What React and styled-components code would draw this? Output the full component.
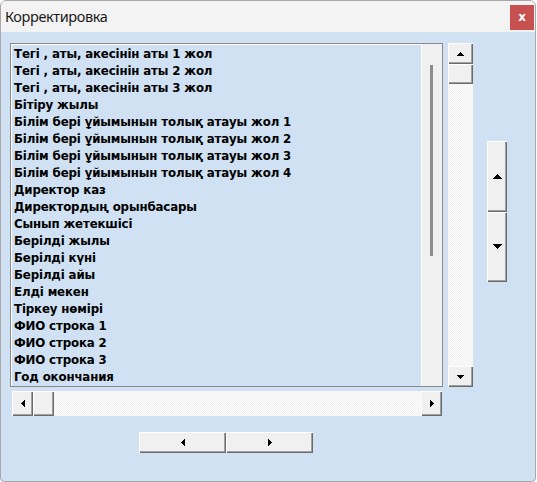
import React from "react";
import styled, { createGlobalStyle, css } from "styled-components";

const Global = createGlobalStyle`
  html, body { margin: 0; padding: 0; background: #ffffff; }
  body { font-family: "DejaVu Sans", sans-serif; }
`;

const Window = styled.div`
  width: 536px;
  height: 482px;
  box-sizing: border-box;
  border: 1px solid #a8a8a8;
  border-radius: 6px 6px 4px 4px;
  overflow: hidden;
  display: flex;
  flex-direction: column;
  background: #cfe1f2;
`;

const TitleBar = styled.div`
  height: 31px;
  flex: none;
  background: #f3f3f3;
  display: flex;
  align-items: center;
  justify-content: space-between;
  padding: 0 1px 0 4px;
`;

const Title = styled.span`
  font-family: "Noto Sans", "Open Sans", sans-serif;
  font-size: 14.5px;
  letter-spacing: -0.4px;
  color: #1a1a1a;
  margin-top: -1px;
`;

const CloseBtn = styled.div`
  width: 24px;
  height: 25px;
  background: #c75050;
  color: #fff;
  display: flex;
  align-items: center;
  justify-content: center;
  font-family: "DejaVu Sans", sans-serif;
  font-weight: bold;
  font-size: 12px;
  margin-top: 1px;
`;

const Client = styled.div`
  flex: 1;
  display: grid;
  grid-template-columns: 433px 25px 20px;
  grid-template-rows: 344px 25px 20px;
  column-gap: 5px;
  padding: 11px 0 0 9px;
  align-content: start;
`;

const ListBox = styled.div`
  grid-column: 1;
  grid-row: 1;
  box-sizing: border-box;
  border: 1px solid #8a8a8a;
  box-shadow: inset 1px 1px 0 #ffffff;
  display: flex;
  overflow: hidden;
`;

const Items = styled.div`
  flex: 1;
  padding: 2px 0 0 3px;
  display: flex;
  flex-direction: column;
`;

const Item = styled.div`
  height: 17px;
  line-height: 17px;
  font-family: "DejaVu Sans", "Noto Sans", sans-serif;
  font-weight: bold;
  font-size: 11.8px;
  letter-spacing: -0.15px;
  color: #000;
  white-space: nowrap;
`;

const InnerStrip = styled.div`
  width: 21px;
  flex: none;
  background: #f0f0f0;
  border-left: 1px solid #ffffff;
  display: flex;
  justify-content: center;
  padding-top: 21px;
  box-sizing: border-box;
`;

const InnerLine = styled.div`
  width: 3px;
  height: 191px;
  background: #8c8c8c;
  margin-right: 2px;
`;

const raised = css`
  background: #f0f0f0;
  box-shadow: inset 1px 1px 0 #ffffff, inset -1px -1px 0 #6b6b6b,
    inset -2px -2px 0 #a0a0a0;
  box-sizing: border-box;
  display: flex;
  align-items: center;
  justify-content: center;
`;

const dither = css`
  background-color: #ffffff;
  background-image: conic-gradient(
    #f0f0f0 0 25%,
    #ffffff 0 50%,
    #f0f0f0 0 75%,
    #ffffff 0
  );
  background-size: 2px 2px;
`;

const VScroll = styled.div`
  grid-column: 2;
  grid-row: 1;
  display: flex;
  flex-direction: column;
  ${dither};
`;

const HScroll = styled.div`
  grid-column: 1;
  grid-row: 2;
  margin: 4px 0 -4px 2px;
  width: 430px;
  height: 25px;
  display: flex;
  ${dither};
`;

const SBtn = styled.div`
  ${raised};
  width: ${(p) => p.$w}px;
  height: ${(p) => p.$h}px;
  flex: none;
`;

const Spacer = styled.div`
  flex: 1;
`;

/* pixel triangle built from 1px rects */
const Tri = ({ dir, size = 4 }) => {
  const rects = [];
  const vertical = dir === "up" || dir === "down";
  const base = size * 2 - 1;
  for (let i = 0; i < size; i++) {
    const len = 1 + 2 * i;
    const off = size - 1 - i;
    if (vertical) {
      const y = dir === "up" ? i : size - 1 - i;
      rects.push(<rect key={i} x={off} y={y} width={len} height={1} />);
    } else {
      const x = dir === "left" ? i : size - 1 - i;
      rects.push(<rect key={i} x={x} y={off} width={1} height={len} />);
    }
  }
  const w = vertical ? base : size;
  const h = vertical ? size : base;
  return (
    <svg width={w} height={h} viewBox={`0 0 ${w} ${h}`} shapeRendering="crispEdges">
      <g fill="#000">{rects}</g>
    </svg>
  );
};

const Spinner = styled.div`
  grid-column: 3;
  grid-row: 1;
  margin: 98px 0 0 9px;
  width: 20px;
  height: 141px;
  display: flex;
  flex-direction: column;
`;

const SpinBtn = styled.div`
  ${raised};
  flex: 1;
`;

const NavRow = styled.div`
  grid-column: 1 / span 3;
  grid-row: 3;
  margin: 20px 0 0 129px;
  display: flex;
`;

const NavBtn = styled.div`
  ${raised};
  width: 87px;
  height: 21px;
`;

const items = [
  "Тегі , аты, акесінін аты 1 жол",
  "Тегі , аты, акесінін аты 2 жол",
  "Тегі , аты, акесінін аты 3 жол",
  "Бітіру жылы",
  "Білім бері ұйымынын толық атауы жол 1",
  "Білім бері ұйымынын толық атауы жол 2",
  "Білім бері ұйымынын толық атауы жол 3",
  "Білім бері ұйымынын толық атауы жол 4",
  "Директор каз",
  "Директордың орынбасары",
  "Сынып жетекшісі",
  "Берілді жылы",
  "Берілді күні",
  "Берілді айы",
  "Елді мекен",
  "Тіркеу нөмірі",
  "ФИО строка 1",
  "ФИО строка 2",
  "ФИО строка 3",
  "Год окончания",
];

export default function App() {
  return (
    <>
      <Global />
      <Window>
        <TitleBar>
          <Title>Корректировка</Title>
          <CloseBtn>x</CloseBtn>
        </TitleBar>
        <Client>
          <ListBox>
            <Items>
              {items.map((t) => (
                <Item key={t}>{t}</Item>
              ))}
            </Items>
            <InnerStrip>
              <InnerLine />
            </InnerStrip>
          </ListBox>
          <VScroll>
            <SBtn $w={25} $h={21}>
              <Tri dir="up" />
            </SBtn>
            <SBtn $w={25} $h={20} />
            <Spacer />
            <SBtn $w={25} $h={21}>
              <Tri dir="down" />
            </SBtn>
          </VScroll>
          <Spinner>
            <SpinBtn>
              <Tri dir="up" size={5} />
            </SpinBtn>
            <SpinBtn>
              <Tri dir="down" size={5} />
            </SpinBtn>
          </Spinner>
          <HScroll>
            <SBtn $w={21} $h={25}>
              <Tri dir="left" />
            </SBtn>
            <SBtn $w={21} $h={25} />
            <Spacer />
            <SBtn $w={21} $h={25}>
              <Tri dir="right" />
            </SBtn>
          </HScroll>
          <NavRow>
            <NavBtn>
              <Tri dir="left" />
            </NavBtn>
            <NavBtn>
              <Tri dir="right" />
            </NavBtn>
          </NavRow>
        </Client>
      </Window>
    </>
  );
}
